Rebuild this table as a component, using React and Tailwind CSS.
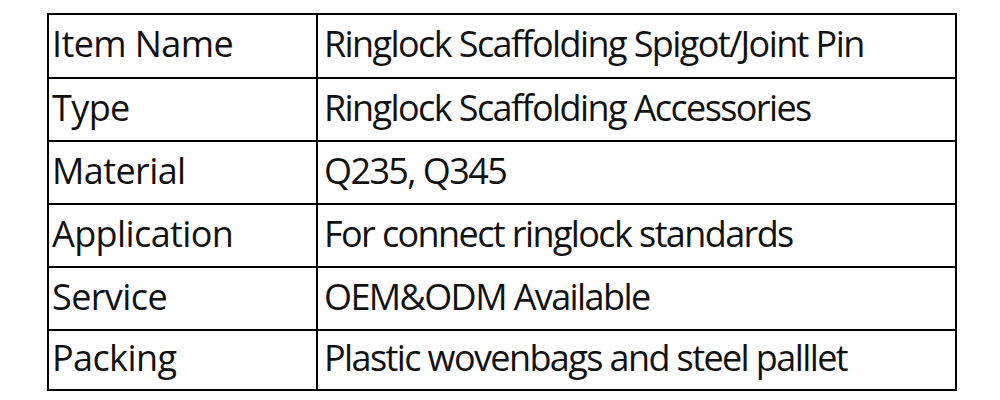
import React from "react";

const rows = [
  ["Item Name", "Ringlock Scaffolding Spigot/Joint Pin", "h-[64px]"],
  ["Type", "Ringlock Scaffolding Accessories", "h-[63px]"],
  ["Material", "Q235, Q345", "h-[63px]"],
  ["Application", "For connect ringlock standards", "h-[63px]"],
  ["Service", "OEM&ODM Available", "h-[63px]"],
  ["Packing", "Plastic wovenbags and steel palllet", "h-[58px]"],
];

export default function App() {
  return (
    <div className="w-[1000px] h-[400px] bg-white pt-[13px] pl-[47px]" style={{ fontFamily: '"Open Sans", sans-serif' }}>
      <div className="w-[910px] border-2 border-black flex flex-col">
        {rows.map(([k, v, h], i) => (
          <div
            key={k}
            className={`flex ${h} ${i < rows.length - 1 ? "border-b-2 border-black" : ""}`}
          >
            <div className="w-[269px] border-r-2 border-black flex items-center pl-[3px] pb-[4px] text-[36px] tracking-[-0.6px] text-[#111]">
              {k}
            </div>
            <div className="flex-1 flex items-center pl-[6px] pb-[4px] text-[36px] tracking-[-1.6px] text-[#111]">
              {v}
            </div>
          </div>
        ))}
      </div>
    </div>
  );
}
